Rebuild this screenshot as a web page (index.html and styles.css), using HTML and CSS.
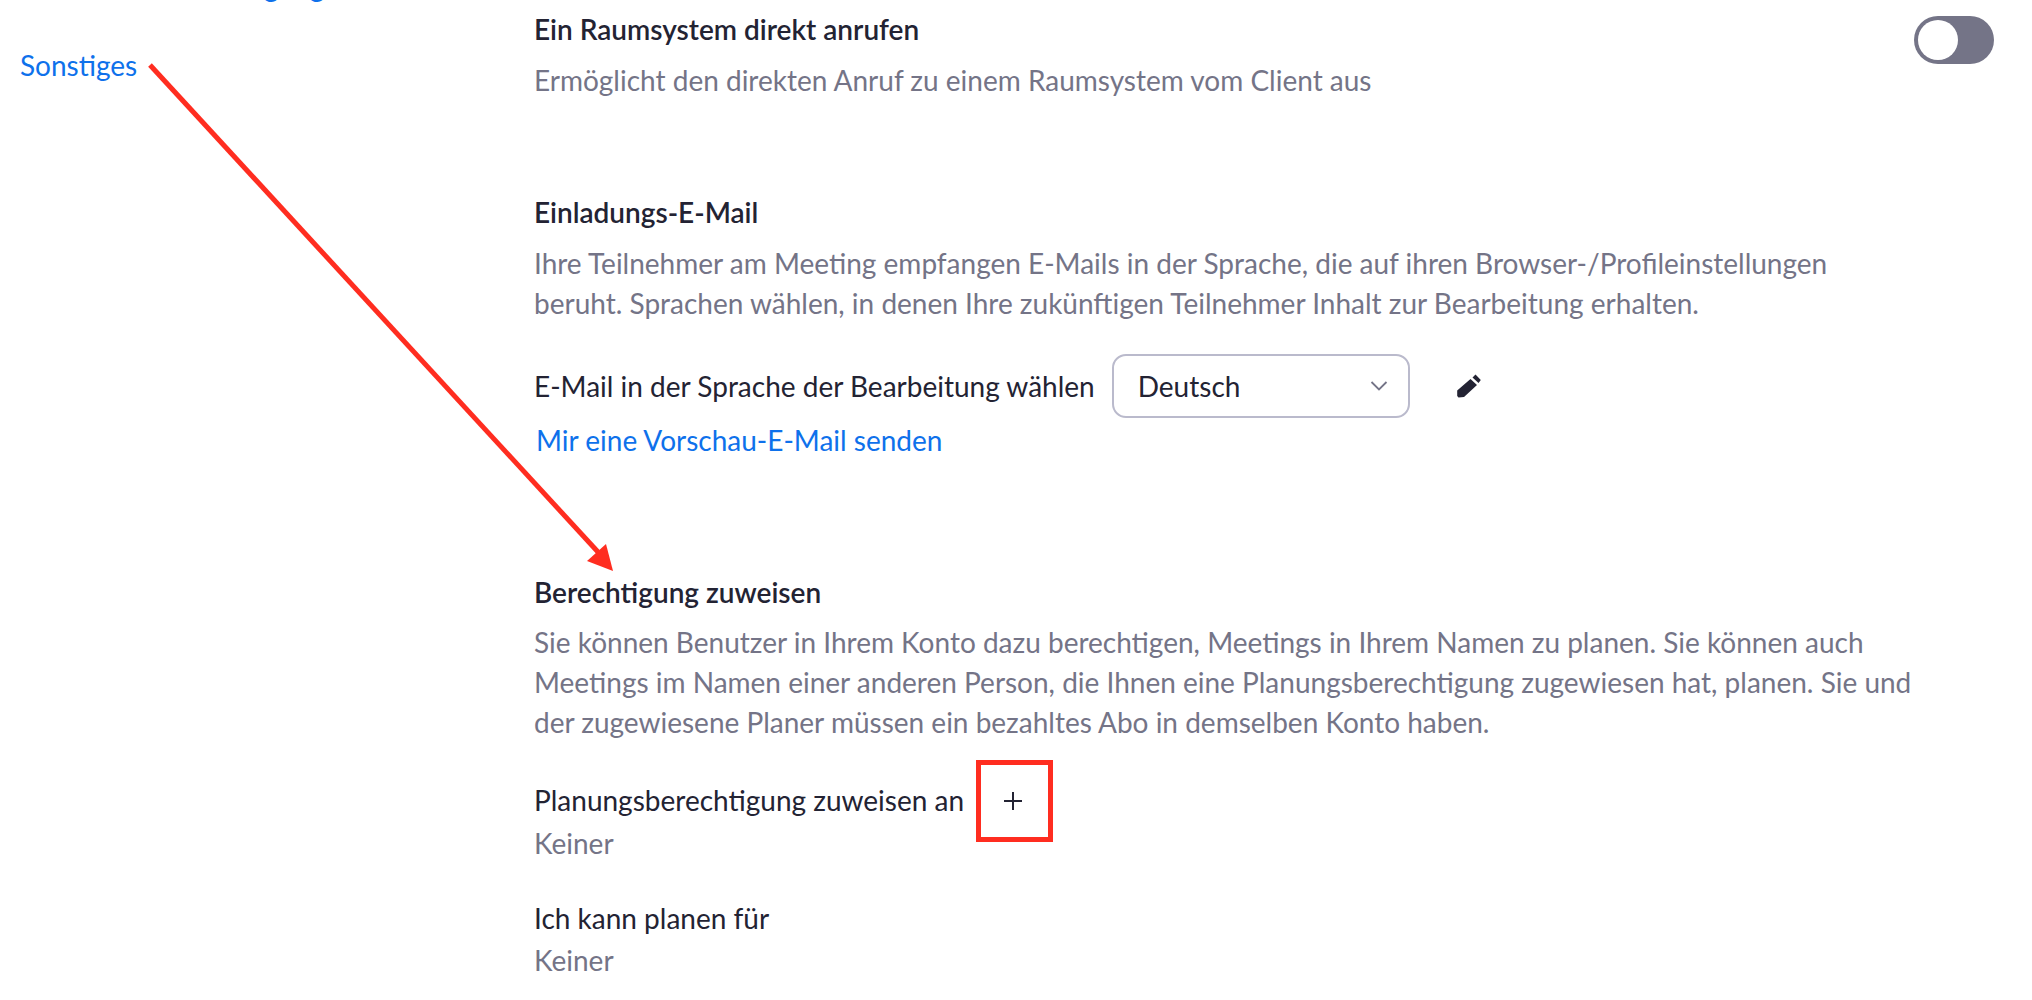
FILE: index.html
```html
<!DOCTYPE html>
<html lang="de">
<head>
    <meta charset="UTF-8">
    <meta name="viewport" content="width=device-width, initial-scale=1.0">
    <title>Einstellungen</title>
    <link rel="stylesheet" href="styles.css">
</head>
<body>
    <div class="page">
        <nav class="sidebar">
            <a class="nav-link" href="#">E-Mail-Benachrichtigung</a>
            <a class="nav-link" href="#">Sonstiges</a>
        </nav>
        <main class="content">
            <section class="setting setting-first">
                <div class="setting-row">
                    <div>
                        <h3>Ein Raumsystem direkt anrufen</h3>
                        <p class="desc">Ermöglicht den direkten Anruf zu einem Raumsystem vom Client aus</p>
                    </div>
                    <span class="toggle"><span class="knob"></span></span>
                </div>
            </section>
            <section class="setting setting-mail">
                <h3>Einladungs-E-Mail</h3>
                <p class="desc">Ihre Teilnehmer am Meeting empfangen E-Mails in der Sprache, die auf ihren Browser-/Profileinstellungen<br>beruht. Sprachen wählen, in denen Ihre zukünftigen Teilnehmer Inhalt zur Bearbeitung erhalten.</p>
                <div class="lang-row">
                    <span class="label">E-Mail in der Sprache der Bearbeitung wählen</span>
                    <div class="select">
                        <span>Deutsch</span>
                        <svg width="18" height="10" viewBox="0 0 18 10"><path d="M1.5 1 L9 8.5 L16.5 1" fill="none" stroke="#747487" stroke-width="1.8"/></svg>
                    </div>
                    <svg class="pencil" width="24" height="24" viewBox="0 0 24 24"><path d="M15.5 3.5 L18.5 0.5 L23.8 6 L21.5 9 Z M13.5 5 L20 11 L7 23 L1.5 23.5 L0.2 22 L0.2 16.5 Z" fill="#232333"/></svg>
                </div>
                <a class="preview-link" href="#">Mir eine Vorschau-E-Mail senden</a>
            </section>
            <section class="setting setting-assign">
                <h3>Berechtigung zuweisen</h3>
                <p class="desc">Sie können Benutzer in Ihrem Konto dazu berechtigen, Meetings in Ihrem Namen zu planen. Sie können auch<br>Meetings im Namen einer anderen Person, die Ihnen eine Planungsberechtigung zugewiesen hat, planen. Sie und<br>der zugewiesene Planer müssen ein bezahltes Abo in demselben Konto haben.</p>
                <div class="assign-row">
                    <span class="label label-raised">Planungsberechtigung zuweisen an</span>
                    <span class="add-box">
                        <svg width="20" height="20" viewBox="0 0 20 20"><path d="M10 1 V19 M1 10 H19" stroke="#232333" stroke-width="2"/></svg>
                    </span>
                </div>
                <p class="desc">Keiner</p>
                <p class="label can-plan">Ich kann planen für</p>
                <p class="desc">Keiner</p>
            </section>
        </main>
        <!-- annotation arrow drawn over the page -->
        <svg class="arrow" width="2032" height="1000" viewBox="0 0 2032 1000">
            <line x1="150" y1="65" x2="598" y2="552" stroke="#ff2d20" stroke-width="5"/>
            <polygon points="613,571 587,561 606,544" fill="#ff2d20"/>
        </svg>
    </div>
</body>
</html>
```

FILE: styles.css
```css
* {
    box-sizing: border-box;
}

html, body {
    height: 100%;
}

body {
    margin: 0;
    overflow: hidden;
    background-color: #fff;
    font-family: Lato, "Open Sans", sans-serif;
    font-size: 28px;
    line-height: 40px;
    color: #232333;
}

.page {
    position: relative;
    display: flex;
    height: 1000px;
    overflow: hidden;
}

.sidebar {
    flex: 0 0 534px;
    display: flex;
    flex-direction: column;
    gap: 39px;
    margin-top: -34px;
    padding-left: 20px;
}

.nav-link, .preview-link {
    color: #0e71eb;
    text-decoration: none;
}

.content {
    flex: 1;
    padding-top: 9px;
    padding-right: 38px;
}

h3 {
    margin: 0 0 11px;
    font-size: 28px;
    font-weight: 600;
    line-height: 40px;
}

.desc {
    margin: 0;
    color: #747487;
}

.setting-row {
    display: flex;
    justify-content: space-between;
    align-items: flex-start;
}

.toggle {
    display: block;
    width: 80px;
    height: 48px;
    margin-top: 7px;
    padding: 4px;
    border-radius: 24px;
    background-color: #747487;
}

.knob {
    display: block;
    width: 40px;
    height: 40px;
    border-radius: 50%;
    background-color: #fff;
}

.setting-mail {
    margin-top: 92px;
}

.lang-row {
    display: flex;
    align-items: center;
    margin-top: 31px;
}

.select {
    display: flex;
    align-items: center;
    justify-content: space-between;
    width: 298px;
    height: 64px;
    margin-left: 17px;
    padding: 0 20px 0 24px;
    border: 2px solid #babacc;
    border-radius: 14px;
}

.pencil {
    margin-left: 47px;
}

.preview-link {
    display: block;
    margin-top: 2px;
    margin-left: 2px;
}

.setting-assign {
    margin-top: 112px;
}

.setting-assign h3 {
    margin-bottom: 10px;
}

.assign-row {
    display: flex;
    align-items: center;
    height: 44px;
    margin-top: 37px;
}

.label-raised {
    padding-bottom: 3px;
}

.add-box {
    display: flex;
    align-items: center;
    justify-content: center;
    width: 77px;
    height: 82px;
    margin: -19px 0 -19px 12px;
    padding-right: 3px;
    border: 5px solid #ff2d20;
}

.can-plan {
    margin: 35px 0 2px;
}

.arrow {
    position: absolute;
    top: 0;
    left: 0;
    pointer-events: none;
}
```
